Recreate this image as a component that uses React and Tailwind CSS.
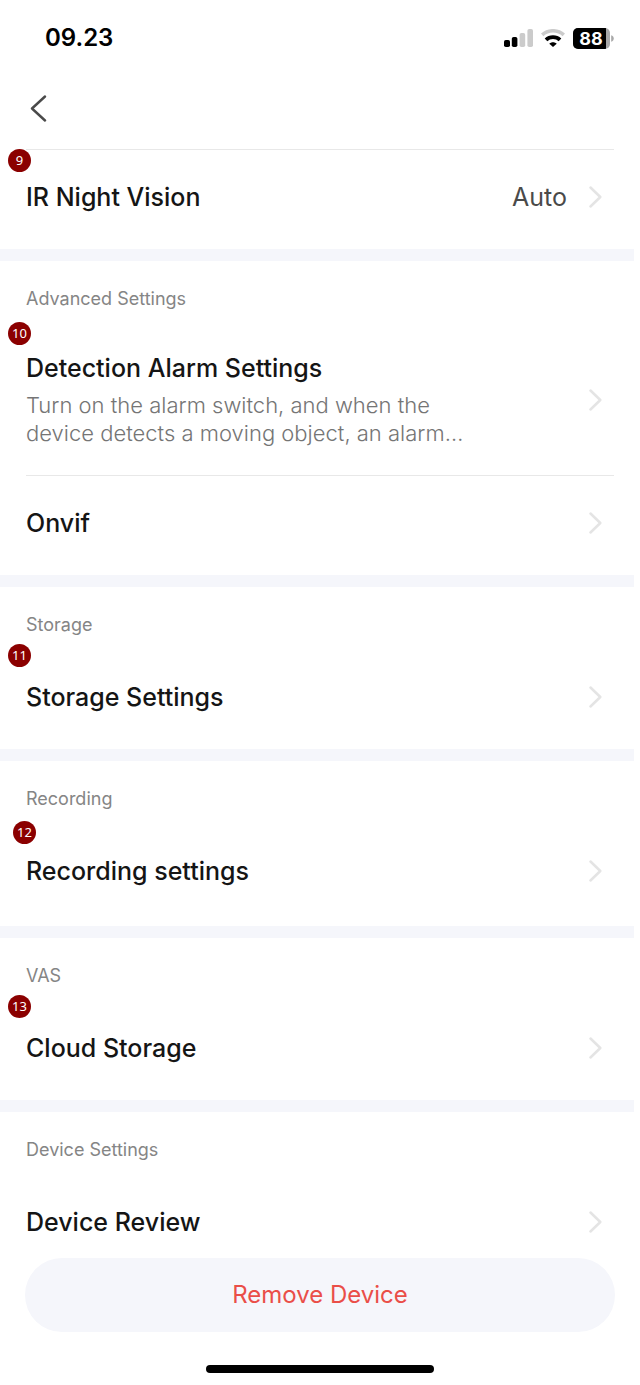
import clsx from "clsx";

const sections = [
  {
    items: [
      { title: "IR Night Vision", value: "Auto", step: 9, stepPos: "-top-px left-2" },
    ],
  },
  {
    label: "Advanced Settings",
    items: [
      {
        title: "Detection Alarm Settings",
        description:
          "Turn on the alarm switch, and when the device detects a moving object, an alarm…",
        step: 10,
        stepPos: "-top-0.5 left-2",
        padding: "py-7",
      },
      { title: "Onvif" },
    ],
  },
  {
    label: "Storage",
    items: [{ title: "Storage Settings", step: 11, stepPos: "-top-1.5 left-2" }],
  },
  {
    label: "Recording",
    items: [
      {
        title: "Recording settings",
        step: 12,
        stepPos: "-top-[3px] left-[13px]",
        padding: "pt-[31px] pb-[39px]",
      },
    ],
  },
  {
    label: "VAS",
    items: [{ title: "Cloud Storage", step: 13, stepPos: "-top-1.5 left-2" }],
  },
  {
    label: "Device Settings",
    items: [{ title: "Device Review", padding: "pt-[31px] pb-5" }],
  },
];

function StatusBar() {
  return (
    <div className="flex h-[76px] items-center justify-between pr-[26px] pl-[45px]">
      <span className="text-[24px] leading-8 font-semibold text-black">09.23</span>

      <div className="flex items-center gap-2">
        {/* Signal */}
        <svg width="29" height="18" viewBox="0 0 29 18">
          <rect x="0" y="11" width="6" height="7" rx="1.8" fill="#000" />
          <rect x="7.8" y="8" width="5.6" height="10" rx="1.8" fill="#000" />
          <rect x="15.6" y="4" width="5.6" height="14" rx="1.8" fill="#cbcbcb" />
          <rect x="23.4" y="0" width="5.6" height="18" rx="1.8" fill="#cbcbcb" />
        </svg>

        {/* Wifi */}
        <svg width="24" height="18" viewBox="0 0 24 18" fill="none">
          <path d="M1.2 5.9C7.2 0.4 16.8 0.4 22.8 5.9" stroke="#cbcbcb" strokeWidth="3.6" />
          <path d="M5 10.9C8.8 7.3 15.2 7.3 19 10.9" stroke="#000" strokeWidth="3.8" />
          <path d="M12 18L8.3 14.8C10.3 12.8 13.7 12.8 15.7 14.8Z" fill="#000" />
        </svg>

        {/* Battery */}
        <svg width="41" height="21" viewBox="0 0 41 21">
          <defs>
            <clipPath id="battery">
              <rect width="37" height="21" rx="5" />
            </clipPath>
          </defs>
          <g clipPath="url(#battery)">
            <rect width="37" height="21" fill="#a8a8a8" />
            <rect width="33" height="21" fill="#000" />
          </g>
          <path d="M38.2 7.3C41.6 8 41.6 13 38.2 13.7Z" fill="#a8a8a8" />
          <text x="18" y="17" textAnchor="middle" fontSize="18" fontWeight="700" fill="#fff">
            88
          </text>
        </svg>
      </div>
    </div>
  );
}

function Arrow() {
  return (
    <svg className="shrink-0" width="13" height="22" viewBox="0 0 13 22" fill="none">
      <path
        d="M1.5 1.5L11.3 11L1.5 20.5"
        stroke="#e4e4e4"
        strokeWidth="2.5"
        strokeLinecap="round"
        strokeLinejoin="round"
      />
    </svg>
  );
}

function Row({ title, value, description, step, stepPos, padding = "pt-[31px] pb-9" }) {
  return (
    <div className="relative">
      <button
        type="button"
        className={clsx("flex w-full items-center justify-between pr-8 pl-[26px] text-left", padding)}
      >
        <span className="block">
          <span className="block text-[25px] leading-8 font-medium text-[#151515]">{title}</span>
          {description && (
            <span className="mt-[7px] block max-w-[460px] text-[22px] leading-7 font-light text-[#757575]">
              {description}
            </span>
          )}
        </span>
        <span className="flex items-center gap-[22px]">
          {value && <span className="text-[25px] leading-8 text-[#4a4a4a]">{value}</span>}
          <Arrow />
        </span>
      </button>
      {step && (
        <span
          className={clsx(
            "absolute flex size-[23px] items-center justify-center rounded-full bg-[#8b0000] font-['Noto_Sans',sans-serif] text-[13px] leading-none text-white",
            stepPos
          )}
        >
          {step}
        </span>
      )}
    </div>
  );
}

export default function App() {
  return (
    <div className="min-h-screen bg-white font-['Inter',sans-serif]">
      <StatusBar />

      <header className="flex h-[73px] items-center pb-2 pl-[30px]">
        <button type="button" aria-label="Back">
          <svg width="17" height="27" viewBox="0 0 17 27" fill="none">
            <path
              d="M15 1.5L2 13.5L15 25.5"
              stroke="#4a4a4a"
              strokeWidth="2.4"
              strokeLinecap="round"
              strokeLinejoin="round"
            />
          </svg>
        </button>
      </header>

      <main>
        <hr className="mx-[26px] border-[#e8e8e8]" />
        {sections.map((section, i) => (
          <section key={i}>
            {i > 0 && <div className="mr-1.5 h-3 bg-[#f5f6fb]" />}
            {section.label && (
              <h2 className="pt-[25px] pb-3 pl-[26px] text-[18px] leading-[26px] text-[#858585]">
                {section.label}
              </h2>
            )}
            <ul className="mr-1.5">
              {section.items.map((item, j) => (
                <li key={item.title}>
                  {j > 0 && <hr className="mr-5 ml-[26px] border-[#e8e8e8]" />}
                  <Row {...item} />
                </li>
              ))}
            </ul>
          </section>
        ))}
      </main>

      <footer className="flex flex-col items-center px-[25px] pb-3">
        <button
          type="button"
          className="h-[74px] w-full rounded-full bg-[#f5f6fb] text-[24px] leading-8 text-[#ea4e48]"
        >
          Remove Device
        </button>
        <div className="mt-[33px] h-2 w-[228px] rounded-full bg-black" />
      </footer>
    </div>
  );
}
